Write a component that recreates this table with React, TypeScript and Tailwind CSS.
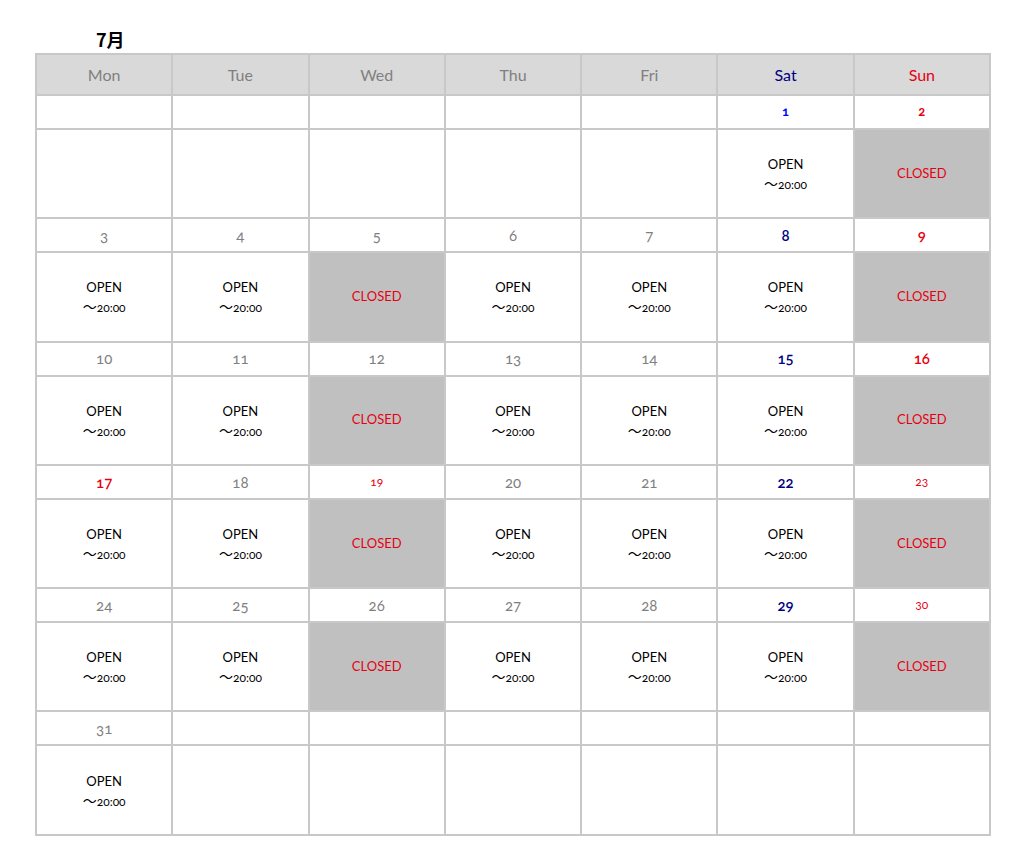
import React from "react";

const gray = "text-[#7f7f7f] text-[15px]";
const navy = "text-[#000080] text-[15px] font-semibold";
const red = "text-[#e60012] text-[15px]";

const dayCls = (d: number): string => {
  if (d === 1) return "text-[#0000ff] text-[13px] font-bold";
  if (d === 2) return "text-[#e60012] text-[13px] font-bold";
  if ([8, 15, 22, 29].includes(d)) return navy;
  if ([9, 16, 17].includes(d)) return red + " font-semibold";
  if ([19, 23, 30].includes(d)) return "text-[#e60012] text-[12px]";
  return gray;
};

const weeks: (number | null)[][] = [
  [null, null, null, null, null, 1, 2],
  [3, 4, 5, 6, 7, 8, 9],
  [10, 11, 12, 13, 14, 15, 16],
  [17, 18, 19, 20, 21, 22, 23],
  [24, 25, 26, 27, 28, 29, 30],
  [31, null, null, null, null, null, null],
];

const headers = [
  { t: "Mon", c: "text-[#808080]" },
  { t: "Tue", c: "text-[#808080]" },
  { t: "Wed", c: "text-[#808080]" },
  { t: "Thu", c: "text-[#808080]" },
  { t: "Fri", c: "text-[#808080]" },
  { t: "Sat", c: "text-[#000080]" },
  { t: "Sun", c: "text-[#e60012]" },
];

function Content({ d, col }: { d: number | null; col: number }) {
  if (d === null) return <div className="bg-white h-[87.3px]" />;
  const closed = col === 2 || col === 6;
  if (closed)
    return (
      <div className="bg-[#c0c0c0] h-[87.3px] flex items-center justify-center text-[#e60012] text-[13px]">
        CLOSED
      </div>
    );
  return (
    <div className="bg-white h-[87.3px] pt-[3px] flex flex-col items-center justify-center text-black">
      <div className="text-[13px] leading-[19px]">OPEN</div>
      <div className="text-[12px] leading-[20px]">
        <span className="text-[14px]">〜</span>20:00
      </div>
    </div>
  );
}

export default function App() {
  return (
    <div
      className="w-[1020px] h-[868px] bg-white"
      style={{ fontFamily: "Lato, 'Open Sans', 'Noto Sans CJK JP', sans-serif", fontVariantNumeric: "oldstyle-nums" }}
    >
      <div className="pt-[26px] pl-[96px] h-[53px] text-[18px] font-bold text-black" style={{ fontFamily: "'Noto Sans CJK JP', sans-serif", fontVariantNumeric: "normal" }}>
        7月
      </div>
      <div className="ml-[35px] w-[956px] border-2 border-[#c8c8c8] bg-[#c8c8c8] grid grid-cols-7 gap-[2px]">
        {headers.map((h) => (
          <div key={h.t} className={`bg-[#d9d9d9] h-[39px] flex items-center justify-center text-[16px] ${h.c}`}>
            {h.t}
          </div>
        ))}
        {weeks.map((w, wi) => (
          <React.Fragment key={wi}>
            {w.map((d, i) => (
              <div key={"d" + i} className="bg-white h-[32px] flex items-center justify-center">
                {d !== null && <span className={dayCls(d)}>{d}</span>}
              </div>
            ))}
            {w.map((d, i) => (
              <Content key={"c" + i} d={d} col={i} />
            ))}
          </React.Fragment>
        ))}
      </div>
    </div>
  );
}
